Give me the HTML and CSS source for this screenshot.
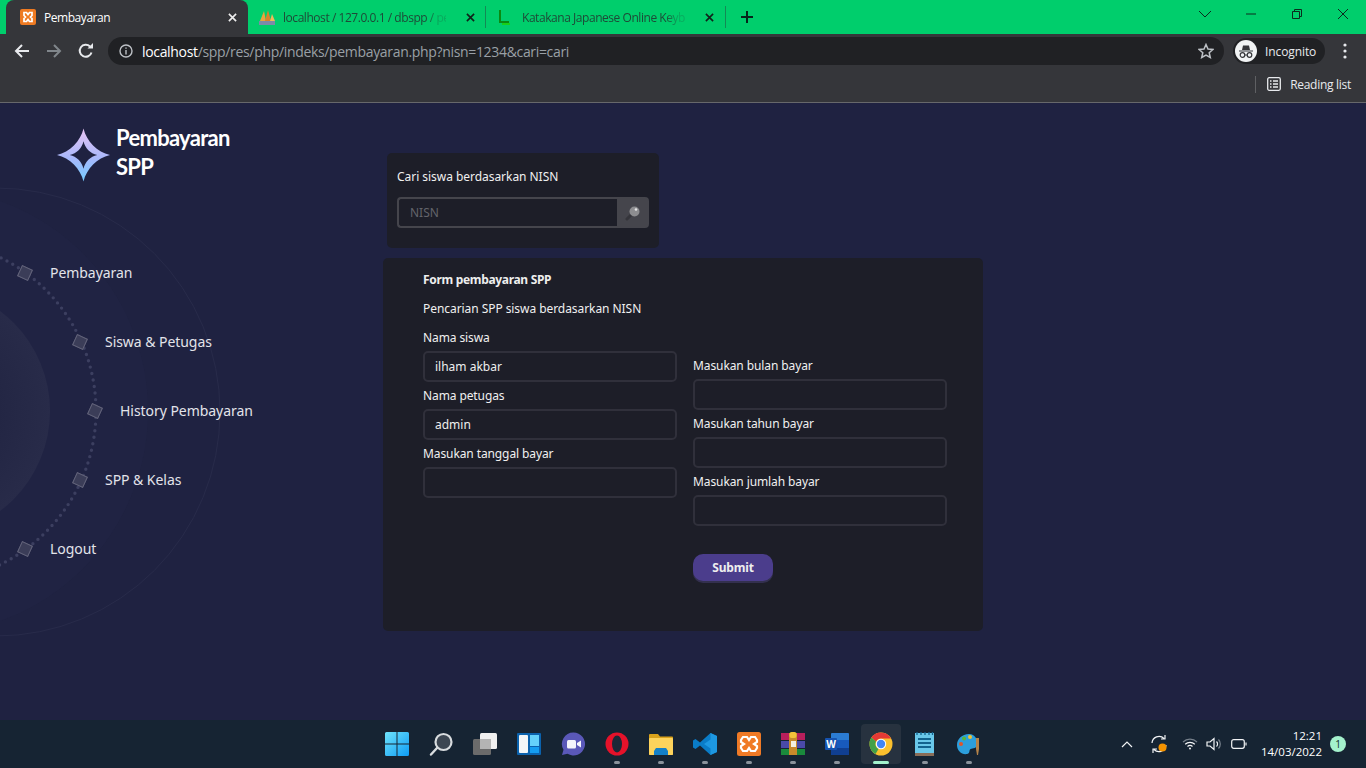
FILE: index.html
```html
<!DOCTYPE html>
<html lang="id">
<head>
    <meta charset="UTF-8">
    <title>Pembayaran</title>
    <link rel="stylesheet" href="styles.css">
</head>
<body>
    <!-- browser: tabs -->
    <div class="tabstrip">
        <div class="tab active">
            <svg class="fav" viewBox="0 0 16 16"><rect width="16" height="16" rx="2" fill="#ee7a22"/><path d="M4 3.500h2.500L8 5.500l1.500-2H12v3L10.500 8l1.500 1.500v3H9.500L8 10.500l-1.500 2H4v-3L5.500 8 4 6.500z" fill="none" stroke="#fff" stroke-width="1.700"/></svg>
            <span class="tab-title">Pembayaran</span>
            <svg class="tab-x light" viewBox="0 0 10 10"><path d="M1 1l8 8M9 1l-8 8"/></svg>
        </div>
        <div class="tab second">
            <svg class="fav wide" viewBox="0 0 18 18"><path d="M2 13L6 3l2 10z" fill="#e8a33d"/><path d="M7 13l3-11 3 11z" fill="#d9822b"/><path d="M12 13L14 6l3 7z" fill="#f0b95a"/><rect x="1" y="13" width="16" height="4" fill="#7d8aa8"/></svg>
            <span class="tab-title fade">localhost / 127.0.0.1 / dbspp / pe</span>
            <svg class="tab-x" viewBox="0 0 10 10"><path d="M1 1l8 8M9 1l-8 8"/></svg>
        </div>
        <div class="tab third">
            <svg class="fav" viewBox="0 0 16 16"><path d="M3 1v12h9" fill="none" stroke="#0a8a12" stroke-width="2"/><path d="M5 15h8" stroke="#18d018" stroke-width="2"/></svg>
            <span class="tab-title fade">Katakana Japanese Online Keybo</span>
            <svg class="tab-x" viewBox="0 0 10 10"><path d="M1 1l8 8M9 1l-8 8"/></svg>
        </div>
        <svg class="new-tab" viewBox="0 0 12 12"><path d="M6 0v12M0 6h12"/></svg>
        <div class="win-btns">
            <svg viewBox="0 0 46 14"><path d="M17 4l6 6 6-6" class="thin"/></svg>
            <svg viewBox="0 0 46 14"><path d="M18 7h10" class="thin"/></svg>
            <svg viewBox="0 0 46 14"><path d="M18.500 4.500h7v7h-7zM20.500 4.500v-2h7v7h-2" class="thin"/></svg>
            <svg viewBox="0 0 46 14"><path d="M18 2l10 10M28 2L18 12" class="thin"/></svg>
        </div>
    </div>

    <!-- browser: toolbar -->
    <div class="toolbar">
        <svg class="nav-ico back" viewBox="0 0 16 16"><path d="M15 8H2M8 2L2 8l6 6"/></svg>
        <svg class="nav-ico fwd" viewBox="0 0 16 16"><path d="M1 8h13M8 2l6 6-6 6"/></svg>
        <svg class="nav-ico reload" viewBox="0 0 16 16"><path d="M13.500 9.500A6 6 0 1 1 12 3.500"/><path class="solid" d="M9.500 5.500H15V0z"/></svg>
        <div class="omnibox">
            <svg class="info" viewBox="0 0 14 14"><circle cx="7" cy="7" r="6"/><path d="M7 6v4.500M7 3.500v1.300"/></svg>
            <span class="url"><b>localhost</b>/spp/res/php/indeks/pembayaran.php?nisn=1234&amp;cari=cari</span>
            <svg class="star" viewBox="0 0 16 16"><path d="M8 1.500l2 4.500 4.900.5-3.700 3.200 1.100 4.800L8 12l-4.300 2.500 1.100-4.800L1.100 6.500 6 6z"/></svg>
        </div>
        <div class="incognito">
            <svg class="inc-ico" viewBox="0 0 22 22"><circle cx="11" cy="11" r="11" fill="#f1f3f4"/><path d="M4 10.500h14v1H4zM7 10l1-4.500h6l1 4.500z" fill="#35363a"/><circle cx="7.500" cy="15" r="2.300" fill="none" stroke="#35363a" stroke-width="1.200"/><circle cx="14.500" cy="15" r="2.300" fill="none" stroke="#35363a" stroke-width="1.200"/><path d="M9.800 15h2.400" stroke="#35363a"/></svg>
            <span>Incognito</span>
        </div>
        <svg class="menu-dots" viewBox="0 0 4 16"><circle cx="2" cy="2" r="1.600"/><circle cx="2" cy="8" r="1.600"/><circle cx="2" cy="14" r="1.600"/></svg>
    </div>

    <!-- browser: bookmarks -->
    <div class="bookmarks">
        <span class="bm-sep"></span>
        <svg class="bm-ico" viewBox="0 0 14 14"><rect x=".7" y=".7" width="12.600" height="12.600" rx="1.500"/><path d="M3 4h1.500M6 4h5M3 7h1.500M6 7h5M3 10h1.500M6 10h5"/></svg>
        <span class="bm-text">Reading list</span>
    </div>

    <!-- page -->
    <div class="page">
        <svg class="orbit" width="400" height="617" viewBox="0 0 400 617">
            <defs><radialGradient id="coreGrad" gradientUnits="userSpaceOnUse" cx="-75" cy="308" r="125"><stop offset=".5" stop-color="#222543"/><stop offset="1" stop-color="#282b49"/></radialGradient></defs>
            <circle cx="-75" cy="308" r="223" fill="#24274a" fill-opacity=".3"/>
            <circle cx="-75" cy="308" r="125" fill="url(#coreGrad)"/>
            <circle cx="-4" cy="309" r="224" fill="none" stroke="#282b4a"/>
            <circle cx="-75" cy="308" r="171" fill="none" stroke="#3c3f60" stroke-width="3.400" stroke-linecap="round" stroke-dasharray="0 6.600"/>
        </svg>

        <aside class="sidebar">
            <div class="brand">
                <svg class="brand-star" viewBox="0 0 54 54">
                    <defs><linearGradient id="starGrad" x1="0" y1="0" x2="0" y2="1"><stop offset="0" stop-color="#e9c4f3"/><stop offset=".55" stop-color="#a9b8fb"/><stop offset="1" stop-color="#74ccff"/></linearGradient></defs>
                    <path fill="url(#starGrad)" fill-rule="evenodd" d="M27 0C30 13 41 24 54 27 41 30 30 41 27 54 24 41 13 30 0 27 13 24 24 13 27 0zM27 13C25.500 20 20 25.500 13 27 20 28.500 25.500 34 27 41 28.500 34 34 28.500 41 27 34 25.500 28.500 20 27 13z"/>
                </svg>
                <div class="brand-name">Pembayaran<br>SPP</div>
            </div>
            <nav class="menu">
                <a class="menu-item lvl-a"><i class="diamond"></i>Pembayaran</a>
                <a class="menu-item lvl-b"><i class="diamond"></i>Siswa &amp; Petugas</a>
                <a class="menu-item lvl-c"><i class="diamond"></i>History Pembayaran</a>
                <a class="menu-item lvl-b"><i class="diamond"></i>SPP &amp; Kelas</a>
                <a class="menu-item lvl-a"><i class="diamond"></i>Logout</a>
            </nav>
        </aside>

        <main class="content">
            <form class="search-card">
                <label class="search-label">Cari siswa berdasarkan NISN</label>
                <div class="search-group">
                    <input class="search-input" type="text" placeholder="NISN">
                    <button class="search-btn" type="button">
                        <svg viewBox="0 0 16 16" width="16" height="16"><path d="M6 10l-4 4" stroke="#35353b" stroke-width="3" stroke-linecap="round"/><circle cx="9.500" cy="6.500" r="5" fill="#8d8d90"/><circle cx="11" cy="4.500" r="1.300" fill="#e6e6e6"/></svg>
                    </button>
                </div>
            </form>

            <form class="form-card">
                <h3 class="form-title">Form pembayaran SPP</h3>
                <p class="form-sub">Pencarian SPP siswa berdasarkan NISN</p>
                <div class="form-cols">
                    <div class="col">
                        <label class="field-label">Nama siswa</label>
                        <input class="field" type="text" value="ilham akbar">
                        <label class="field-label">Nama petugas</label>
                        <input class="field" type="text" value="admin">
                        <label class="field-label">Masukan tanggal bayar</label>
                        <input class="field" type="text">
                    </div>
                    <div class="col right">
                        <label class="field-label">Masukan bulan bayar</label>
                        <input class="field" type="text">
                        <label class="field-label">Masukan tahun bayar</label>
                        <input class="field" type="text">
                        <label class="field-label">Masukan jumlah bayar</label>
                        <input class="field" type="text">
                        <button class="submit" type="button">Submit</button>
                    </div>
                </div>
            </form>
        </main>
    </div>

    <!-- windows taskbar -->
    <footer class="taskbar">
        <div></div>
        <div class="apps">
            <div class="app"><svg viewBox="0 0 24 24"><defs><linearGradient id="winG" x1="0" y1="0" x2="1" y2="1"><stop offset="0" stop-color="#6fe3fb"/><stop offset="1" stop-color="#0e9cf5"/></linearGradient></defs><path fill="url(#winG)" d="M0 1.500A1.500 1.500 0 0 1 1.500 0H11.500V11.500H0zM12.500 0H22.500A1.500 1.500 0 0 1 24 1.500V11.500H12.500zM0 12.500H11.500V24H1.500A1.500 1.500 0 0 1 0 22.500zM12.500 12.500H24V22.500A1.500 1.500 0 0 1 22.500 24H12.500z"/></svg></div>
            <div class="app"><svg viewBox="0 0 24 24"><path d="M8 16l-6 6.500" stroke="#d8dcdf" stroke-width="2.400" stroke-linecap="round"/><circle cx="14.500" cy="10" r="8" fill="#3c4652" stroke="#d8dcdf" stroke-width="2.200"/></svg></div>
            <div class="app"><svg viewBox="0 0 24 24"><rect x="7" y="1" width="17" height="16" rx="1.500" fill="#f0f0f0"/><rect x="0" y="7" width="18" height="16" rx="1.500" fill="#6b6b6b"/><rect x="7" y="7" width="11" height="10" fill="#b4b4b4"/></svg></div>
            <div class="app"><svg viewBox="0 0 24 24"><rect width="24" height="22" y="1" rx="1" fill="#0b62ad"/><rect x="2" y="3" width="9" height="18" rx="1" fill="#f3f6f8"/><rect x="13" y="3" width="9" height="11" fill="#65d2fb"/><rect x="13" y="15" width="9" height="6" fill="#159df0"/></svg></div>
            <div class="app"><svg viewBox="0 0 24 24"><path d="M12.500 0.500a11.500 11.500 0 1 1-6 21.300L1 23l1.500-5.200A11.500 11.500 0 0 1 12.500 .5z" fill="#5a58b8"/><rect x="6" y="8" width="9" height="8.500" rx="1.500" fill="#f4f4fb"/><path d="M16 11l4-2.500v7L16 13z" fill="#f4f4fb"/></svg></div>
            <div class="app"><svg viewBox="0 0 24 24"><ellipse cx="12" cy="12" rx="11.500" ry="11.500" fill="#e5122a"/><ellipse cx="12" cy="12" rx="5" ry="8.500" fill="#1b2838"/></svg></div>
            <div class="app"><svg viewBox="0 0 24 24"><path d="M0 3a1 1 0 0 1 1-1h8l2 2.500h12a1 1 0 0 1 1 1V22a1 1 0 0 1-1 1H1a1 1 0 0 1-1-1z" fill="#d9a21b"/><rect y="6" width="24" height="17" rx="1" fill="#fdd35c"/><path d="M7 16h10l2 3v4H5v-4z" fill="#1480c8"/></svg></div>
            <div class="app"><svg viewBox="0 0 24 24"><path d="M17.500 1L24 4v16l-6.500 3L7 13.500 2.500 17 0 15.500V8.500L2.500 7 7 10.500z" fill="#0a7cc7"/><path d="M17.500 1L24 4v16l-6.500 3zM17.500 7.500L11 12l6.500 4.500z" fill="#1d98e2"/></svg></div>
            <div class="app"><svg viewBox="0 0 24 24"><rect width="24" height="24" rx="2.500" fill="#f07a26"/><path d="M6 5h4l2 3 2-3h4l2 3v2l-3 2 3 2v2l-2 3h-4l-2-3-2 3H6l-2-3v-2l3-2-3-2V8z" fill="none" stroke="#fff" stroke-width="2.200"/></svg></div>
            <div class="app"><svg viewBox="0 0 24 24"><rect y="1" width="24" height="7" fill="#b81f5c"/><rect y="9" width="24" height="7" fill="#4a4aa8"/><rect y="17" width="24" height="6" fill="#1a8a3c"/><rect x="8" y="1" width="8" height="22" fill="#c98a2b"/><rect x="8.500" y="0" width="7" height="6" rx="2" fill="#f5c23a"/><rect x="10" y="9" width="5" height="6" fill="#f4f0e0"/></svg></div>
            <div class="app"><svg viewBox="0 0 24 24"><rect x="6" y="1" width="18" height="22" rx="1" fill="#2b7cd3"/><rect x="6" y="8" width="18" height="8" fill="#185abd"/><rect x="6" y="16" width="18" height="7" fill="#103f91"/><rect x="0" y="6" width="12" height="12" rx="1" fill="#1653b0"/><text x="6" y="15.500" class="word-w">W</text></svg></div>
            <div class="app on"><svg viewBox="0 0 24 24"><circle cx="12" cy="12" r="11.500" fill="#fbc02d"/><path d="M12 .5A11.500 11.500 0 0 1 22 6.500H12a5.500 5.500 0 0 0-5 3L2.400 5.600A11.500 11.500 0 0 1 12 .5z" fill="#e53935"/><path d="M2.400 5.600L7 9.500A5.500 5.500 0 0 0 9.500 17L6.500 22A11.500 11.500 0 0 1 2.400 5.600z" fill="#43a047"/><circle cx="12" cy="12" r="5.200" fill="#fff"/><circle cx="12" cy="12" r="4.200" fill="#4285f4"/></svg></div>
            <div class="app"><svg viewBox="0 0 24 24"><rect x="2" y="1" width="19" height="23" fill="#69c8ea"/><rect x="2" y="21" width="19" height="3" fill="#8a6d58"/><path d="M5 7h13M5 11h13M5 15h13" stroke="#13648f" stroke-width="1.800"/><path d="M4 0v3M8 0v3M12 0v3M16 0v3M19.500 0v3" stroke="#13648f" stroke-width="1.300"/></svg></div>
            <div class="app"><svg viewBox="0 0 24 24"><path d="M12 2C5 2 0 7 0 13s5 10 10 9c3-.5 2-3 3-4.500s6-.5 7-4C21.500 8 18 2 12 2z" fill="#2c9fdd"/><circle cx="4" cy="12" r="2" fill="#e0562c"/><circle cx="7" cy="6.500" r="2" fill="#5bb536"/><circle cx="13" cy="5" r="2" fill="#f3c22e"/><path d="M19 6h3v11l-1 6h-1l-1-6z" fill="#b58349"/></svg></div>
        </div>
        <div class="tray">
            <svg class="tray-ico chev" viewBox="0 0 12 8"><path d="M1 7l5-5 5 5"/></svg>
            <svg class="tray-ico sync" viewBox="0 0 20 20"><path d="M3 9a7 7 0 0 1 12-4.500M17 11a7 7 0 0 1-12 4.500M12 5h4V1M8 15H4v4"/><circle class="dot" cx="13.500" cy="13.500" r="4"/></svg>
            <svg class="tray-ico wifi" viewBox="0 0 16 12"><path class="dim" d="M1 4a10 10 0 0 1 14 0"/><path d="M3.200 6.200a7 7 0 0 1 9.600 0M5.500 8.500a3.600 3.600 0 0 1 5 0"/><circle class="fill" cx="8" cy="10.500" r="1"/></svg>
            <svg class="tray-ico vol" viewBox="0 0 16 14"><path d="M1 5h3l4-3.500v11L4 9H1z"/><path d="M10.500 4.500a3.500 3.500 0 0 1 0 5"/><path class="dim" d="M12.500 2.500a6.500 6.500 0 0 1 0 9"/></svg>
            <svg class="tray-ico batt" viewBox="0 0 16 10"><rect x=".7" y=".7" width="12.600" height="8.600" rx="2"/><path d="M15 3.500v3"/></svg>
            <div class="clock"><span>12:21</span><span>14/03/2022</span></div>
            <span class="notif">1</span>
        </div>
    </footer>
</body>
</html>
```

FILE: styles.css
```css
* {
    box-sizing: border-box;
}
html, body {
    height: 100%;
}
body {
    margin: 0;
    display: flex;
    flex-direction: column;
    overflow: hidden;
    font-family: "Noto Sans", "Open Sans", sans-serif;
    background: #1f2241;
    color: #fff;
}

/* browser tabs */
.tabstrip {
    height: 34px;
    flex: none;
    display: flex;
    padding-left: 6px;
    background: #00ce6c;
    font-family: "Open Sans", sans-serif;
    font-size: 12px;
    letter-spacing: -0.45px;
}
.tab {
    display: flex;
    align-items: center;
    height: 34px;
    color: #1e4a38;
}
.tab.active {
    width: 242px;
    padding: 0 11px 0 14px;
    background: #35363a;
    border-radius: 8px 8px 0 0;
    color: #fff;
}
.tab.second {
    width: 238px;
    padding: 0 10px 0 10px;
    border-right: 1px solid #138a55;
}
.tab.third {
    width: 240px;
    padding: 0 11px 0 11px;
    border-right: 1px solid #138a55;
}
.tab.second, .tab.third {
    height: 22px;
    margin-top: 6px;
}
.fav {
    width: 16px;
    height: 16px;
    flex: none;
    margin-right: 8px;
}
.fav.wide {
    width: 18px;
    height: 18px;
    margin-right: 7px;
}
.tab.third .fav {
    margin-right: 9px;
}
.tab-title {
    flex: 1;
    min-width: 0;
    white-space: nowrap;
}
.tab-title.fade {
    -webkit-mask-image: linear-gradient(to right, #000 88%, rgba(0, 0, 0, 0.25) 96%);
    mask-image: linear-gradient(to right, #000 88%, rgba(0, 0, 0, 0.25) 96%);
}
.tab-x {
    width: 9px;
    height: 9px;
    flex: none;
    margin-left: 20px;
    stroke: #10231a;
    stroke-width: 1.800;
}
.tab-x.light {
    stroke: #eee;
}
.new-tab {
    width: 12px;
    height: 12px;
    margin: 11px 0 0 15px;
    stroke: #06251a;
    stroke-width: 2;
}
.win-btns {
    margin-left: auto;
    display: flex;
    align-items: flex-start;
}
.win-btns svg {
    width: 46px;
    height: 14px;
    margin-top: 7px;
}
.thin {
    fill: none;
    stroke: #0c2a1d;
    stroke-width: 1;
}

/* toolbar */
.toolbar {
    height: 34px;
    flex: none;
    display: flex;
    align-items: center;
    padding: 0 13px 0 14px;
    background: #35363a;
}
.nav-ico {
    width: 16px;
    height: 16px;
    fill: none;
    stroke: #e8eaed;
    stroke-width: 2;
    margin-right: 16px;
}
.nav-ico.fwd {
    stroke: #80868b;
}
.nav-ico.reload {
    margin-right: 14px;
}
.nav-ico .solid {
    fill: #e8eaed;
    stroke: none;
}
.omnibox {
    width: 1116px;
    height: 28px;
    display: flex;
    align-items: center;
    padding: 0 10px 0 11px;
    background: #202124;
    border-radius: 14px;
}
.info {
    width: 14px;
    height: 14px;
    fill: none;
    stroke: #bdc1c6;
    stroke-width: 1.400;
    margin-right: 9px;
}
.url {
    font-family: "Open Sans", sans-serif;
    font-size: 14px;
    letter-spacing: -0.33px;
    color: #9aa0a6;
}
.url b {
    font-weight: 400;
    color: #fff;
}
.star {
    width: 16px;
    height: 16px;
    margin-left: auto;
    fill: none;
    stroke: #bdc1c6;
    stroke-width: 1.500;
}
.incognito {
    width: 92px;
    height: 26px;
    margin-left: 9px;
    display: flex;
    align-items: center;
    gap: 8px;
    padding-left: 2px;
    background: #202124;
    border-radius: 13px;
    font-family: "Open Sans", sans-serif;
    font-size: 12px;
    letter-spacing: -0.1px;
    color: #e8eaed;
}
.inc-ico {
    width: 22px;
    height: 22px;
}
.menu-dots {
    width: 4px;
    height: 16px;
    margin-left: 18px;
    fill: #e8eaed;
}

/* bookmarks */
.bookmarks {
    height: 35px;
    flex: none;
    display: flex;
    align-items: center;
    justify-content: flex-end;
    padding: 0 15px 2px 0;
    background: #35363a;
    border-bottom: 1px solid #67686b;
    font-family: "Open Sans", sans-serif;
    font-size: 12px;
    letter-spacing: -0.28px;
    color: #e8eaed;
}
.bm-sep {
    width: 1px;
    height: 17px;
    background: #5f6063;
    margin-right: 11px;
}
.bm-ico {
    width: 14px;
    height: 14px;
    fill: none;
    stroke: #e8eaed;
    stroke-width: 1.300;
    margin-right: 9px;
}

/* page */
.page {
    flex: 1;
    min-height: 0;
    position: relative;
    display: flex;
    overflow: hidden;
    background: #1f2241;
}
.orbit {
    position: absolute;
    left: 0;
    top: 0;
}
.sidebar {
    position: relative;
    width: 383px;
    flex: none;
}
.brand {
    display: flex;
    gap: 6px;
    padding: 20px 0 0 57px;
}
.brand-star {
    width: 53px;
    height: 54px;
    margin-top: 5px;
}
.brand-name {
    font-family: Lato, sans-serif;
    font-size: 22px;
    font-weight: 700;
    line-height: 29px;
    letter-spacing: -0.7px;
}
.menu {
    margin-top: 56px;
}
.menu-item {
    height: 69px;
    display: flex;
    align-items: center;
    gap: 19px;
    font-size: 14px;
    letter-spacing: -0.05px;
    color: #e3e4ea;
}
.lvl-a {
    padding-left: 19px;
}
.lvl-b {
    padding-left: 74px;
}
.lvl-c {
    padding-left: 89px;
}
.diamond {
    width: 12px;
    height: 12px;
    background: #3b3d58;
    border: 1px solid #63647b;
    transform: rotate(25deg);
}

.content {
    position: relative;
    padding-top: 50px;
}
.search-card {
    width: 272px;
    height: 95px;
    margin: 0 0 10px 4px;
    padding: 14px 10px 0;
    background: #1d1e28;
    border-radius: 5px;
}
.search-label {
    display: block;
    font-size: 12px;
    line-height: 20px;
    letter-spacing: -0.04px;
    color: #f0f0f0;
}
.search-group {
    display: flex;
    height: 31px;
    margin-top: 10px;
}
.search-input {
    width: 220px;
    padding: 0 11px;
    background: #1d1e28;
    border: 2px solid #45454c;
    border-right: 0;
    border-radius: 4px 0 0 4px;
    outline: none;
    font: 12px "Noto Sans", sans-serif;
    color: #ddd;
}
.search-input::placeholder {
    color: #63646b;
}
.search-btn {
    width: 32px;
    padding: 0;
    display: flex;
    align-items: center;
    justify-content: center;
    background: #45454c;
    border: 0;
    border-radius: 0 4px 4px 0;
}

.form-card {
    width: 600px;
    height: 373px;
    padding: 12px 36px 0 40px;
    background: #1d1e28;
    border-radius: 5px;
}
.form-title {
    margin: 0 0 9px;
    font-size: 12px;
    font-weight: 700;
    line-height: 20px;
    letter-spacing: -0.32px;
    color: #eee;
}
.form-sub {
    margin: 0 0 5px;
    font-size: 12px;
    line-height: 20px;
    letter-spacing: -0.06px;
    color: #f0f0f0;
}
.form-cols {
    display: flex;
    gap: 16px;
}
.col {
    width: 254px;
}
.col.right {
    padding-top: 28px;
}
.field-label {
    display: block;
    height: 27px;
    padding-top: 4px;
    font-size: 12px;
    line-height: 20px;
    letter-spacing: -0.1px;
    color: #f0f0f0;
}
.field {
    display: block;
    width: 100%;
    height: 31px;
    padding: 0 10px;
    background: #1d1e28;
    border: 2px solid #30303b;
    border-radius: 5px;
    outline: none;
    font: 12px "Noto Sans", sans-serif;
    color: #eee;
}
.submit {
    display: block;
    width: 80px;
    height: 27px;
    margin-top: 28px;
    padding: 0;
    background: #4b3d8c;
    border: 0;
    border-radius: 10px;
    box-shadow: 0 2px 0 #33304f;
    font: 700 12px "Noto Sans", sans-serif;
    letter-spacing: -0.2px;
    color: #eee;
}

/* taskbar */
.taskbar {
    height: 48px;
    flex: none;
    display: grid;
    grid-template-columns: 1fr auto 1fr;
    background: #162433;
}
.apps {
    display: flex;
}
.app {
    position: relative;
    width: 44px;
    height: 48px;
    display: flex;
    align-items: center;
    justify-content: center;
}
.app svg {
    width: 24px;
    height: 24px;
}
.app:nth-child(n+6)::after {
    content: "";
    position: absolute;
    left: 19px;
    bottom: 4px;
    width: 6px;
    height: 3px;
    border-radius: 2px;
    background: #8a929b;
}
.app.on::before {
    content: "";
    position: absolute;
    left: 2px;
    top: 4px;
    width: 40px;
    height: 40px;
    border-radius: 4px;
    background: #27323f;
}
.app.on svg {
    position: relative;
}
.app.on::after {
    left: 14px;
    width: 16px;
    background: #a4f2cd;
}
.word-w {
    font: 700 10px "Open Sans", sans-serif;
    fill: #fff;
    text-anchor: middle;
}
.tray {
    display: flex;
    align-items: center;
    justify-content: flex-end;
    padding-right: 20px;
    font-family: "Open Sans", sans-serif;
    font-size: 11.500px;
    color: #fff;
}
.tray-ico {
    fill: none;
    stroke: #f2f4f6;
    stroke-width: 1.200;
}
.tray-ico .dim {
    stroke: #76808b;
}
.tray-ico .fill {
    fill: #f2f4f6;
    stroke: none;
}
.tray-ico .dot {
    fill: #f59300;
    stroke: none;
}
.chev {
    width: 12px;
    height: 8px;
    margin-right: 16px;
}
.sync {
    width: 20px;
    height: 20px;
    margin-right: 13px;
}
.wifi {
    width: 16px;
    height: 12px;
    margin-right: 8px;
}
.vol {
    width: 16px;
    height: 14px;
    margin-right: 9px;
}
.batt {
    width: 16px;
    height: 10px;
}
.clock {
    width: 75px;
    display: flex;
    flex-direction: column;
    align-items: flex-end;
    line-height: 16px;
}
.notif {
    width: 16px;
    height: 16px;
    margin-left: 8px;
    border-radius: 50%;
    background: #a4f2cd;
    color: #12302a;
    font-size: 10px;
    line-height: 16px;
    text-align: center;
}
```
